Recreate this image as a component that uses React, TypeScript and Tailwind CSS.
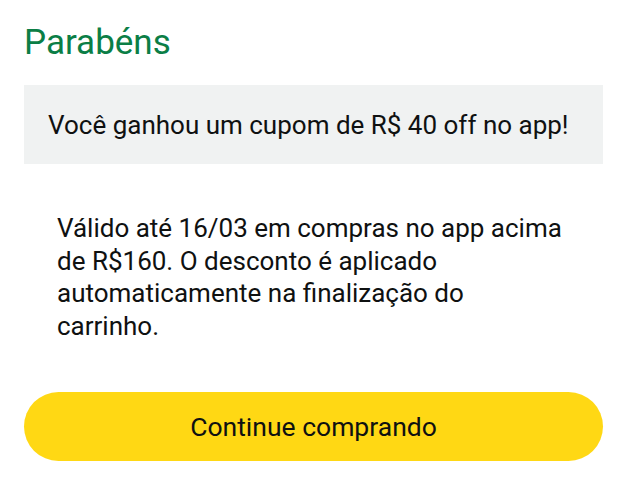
import React from "react";

export default function App() {
  return (
    <div
      className="w-[627px] h-[500px] bg-white px-6 text-[#0f1111]"
      style={{ fontFamily: "Roboto, 'Noto Sans', sans-serif" }}
    >
      {/* Header */}
      <h1 className="pt-[20px] text-[35px] leading-[46px] text-[#0b7e46]">Parabéns</h1>

      {/* Coupon banner */}
      <div className="mt-[19px] h-[79px] bg-[#f0f2f2] px-6 flex items-center">
        <p className="text-[26px] leading-[32px]">Você ganhou um cupom de R$ 40 off no app!</p>
      </div>

      {/* Details */}
      <p className="mt-[48px] ml-[33px] w-[510px] text-[26px] leading-[32.5px]">
        Válido até 16/03 em compras no app acima de R$160. O desconto é aplicado automaticamente na finalização do carrinho.
      </p>

      <button className="mt-[50px] w-full h-[69px] rounded-full bg-[#ffd814] text-[26.5px] text-[#0f1111]">
        Continue comprando
      </button>
    </div>
  );
}
